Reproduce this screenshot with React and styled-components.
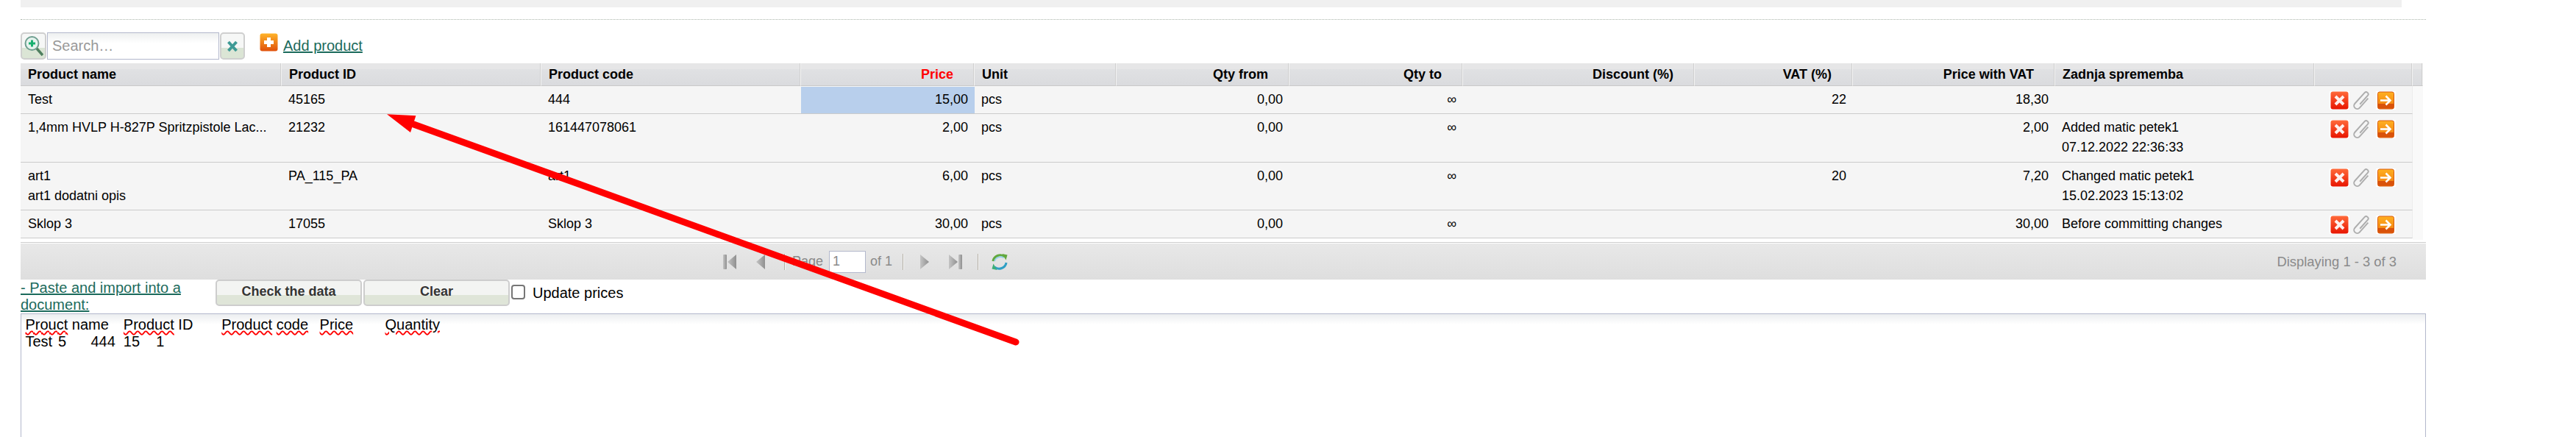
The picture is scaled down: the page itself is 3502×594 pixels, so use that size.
import React from 'react'
import styled, { createGlobalStyle } from 'styled-components'

const Global = createGlobalStyle`
html, body {
  margin: 0;
  height: 594px;
  overflow: hidden;
  background: #fff;
  font-family: "Liberation Sans", Arial, sans-serif;
  color: #000;
}
`

const Page = styled.div`
position: relative;
width: 3502px;
height: 594px;
padding-left: 28px;
box-sizing: border-box;
overflow: hidden;
`

const TopBar = styled.div`
width: 3237px;
height: 10px;
background: #f0f0f0;
`

const Divider = styled.div`
width: 3270px;
margin-top: 16px;
border-top: 1px dotted #a9b5a9;
`

const SearchRow = styled.div`
display: flex;
align-items: flex-start;
margin-top: 17px;
height: 37px;
`

const IconButton = styled.div`
box-sizing: border-box;
width: ${props => props.$width}px;
height: 37px;
display: flex;
align-items: center;
justify-content: center;
border: 2px solid #cfcfcf;
border-radius: 5px;
background: linear-gradient(#f6f7f6 0 58%, #dbe5d5 58% 100%);
`

const SearchInput = styled.input`
box-sizing: border-box;
width: 234px;
height: 37px;
margin: 0 1px;
padding: 0 0 0 6px;
border: 1px solid #b3b8cc;
background: linear-gradient(#eef0f0, #fff 14px);
font: 20px "Liberation Sans", Arial, sans-serif;
outline: none;
&::placeholder {
  color: #999;
  opacity: 1;
}
`

const AddIcon = styled.span`
display: block;
margin: 1px 0 0 20px;
height: 25px;
`

const TealLink = styled.a`
color: #1c6b5c;
font-size: 20px;
line-height: 23px;
text-decoration: underline;
`

const AddLink = styled(TealLink)`
margin: 7px 0 0 7px;
`

const Grid = styled.table`
table-layout: fixed;
width: 3266px;
margin-top: 5px;
border-collapse: separate;
border-spacing: 0;
font-size: 18px;
`

const HeadCell = styled.th`
box-sizing: border-box;
height: 31px;
padding: 0 ${props => props.$align === 'right' ? '28px' : '9px'} 0 10px;
text-align: ${props => props.$align || 'left'};
color: ${props => props.$color || '#000'};
font-size: 18px;
font-weight: bold;
white-space: nowrap;
background: linear-gradient(#e6e6e7 0 8px, #e0e1e3 8px, #dadbde 100%);
border-bottom: 1px solid #c9c9c9;
border-right: 1px solid #f2f2f2;
box-shadow: inset -1px 0 0 #d0d0d0;
`

const Cell = styled.td`
padding: 5px 9px 5px ${props => props.$first ? '10px' : '9px'};
line-height: 27.2px;
text-align: ${props => props.$align || 'left'};
vertical-align: top;
white-space: nowrap;
background: ${props => props.$active ? '#b8cfec' : '#f5f5f5'};
border-bottom: 1px solid #cbcbcb;
box-shadow: ${props => props.$active ? 'inset 0 1px 0 #f5f5f5' : 'none'};
`

const ActionCell = styled.td`
padding: ${props => props.$top}px 0 0 20px;
vertical-align: top;
background: #f5f5f5;
border-bottom: 1px solid #cbcbcb;
border-right: 1px solid #ececec;
`

const Actions = styled.div`
display: flex;
align-items: flex-start;
height: 25px;
`

const ActionIcon = styled.span`
display: block;
height: 25px;
margin-left: ${props => props.$gap || 0}px;
`

const Filler = styled.td`
background: #f9f9f9;
padding: 0;
`

const SpacerRow = styled.tr`
height: 2px;
`

const SpacerCell = styled.td`
padding: 0;
height: 2px;
line-height: 0;
font-size: 0;
`

const Pager = styled.div`
display: flex;
align-items: center;
width: 3270px;
height: 49px;
margin-top: 5px;
box-sizing: border-box;
padding: 0 40px 0 955px;
color: #8a8a8a;
font-size: 18px;
background: linear-gradient(#e8e8e8, #dedede);
box-shadow: 0 -1px 0 #fff, 0 -2px 0 #cdcdcd;
`

const PagerIcon = styled.span`
display: block;
height: 24px;
margin-left: ${props => props.$gap || 0}px;
`

const PagerSep = styled.span`
display: block;
width: 1px;
height: 22px;
margin-left: ${props => props.$gap}px;
background: #b5b0a6;
box-shadow: 1px 0 0 #f4f4f4;
`

const PagerLabel = styled.span`
margin-left: ${props => props.$gap}px;
`

const PageInput = styled.input`
box-sizing: border-box;
width: 50px;
height: 30px;
margin-left: 8px;
padding: 0 0 0 4px;
border: 1px solid #b3b8cc;
background: #fff;
color: #8a8a8a;
font: 18px "Liberation Sans", Arial, sans-serif;
`

const Displaying = styled.span`
margin-left: auto;
font-size: 18.4px;
`

const ImportRow = styled.div`
display: flex;
align-items: flex-start;
height: 46px;
`

const ImportLink = styled(TealLink)`
display: block;
width: 265px;
`

const ImportButton = styled.button`
box-sizing: border-box;
width: 199px;
height: 36px;
margin-right: 2px;
padding: 0 0 3px;
border: 2px solid #cdcdcd;
border-radius: 5px;
color: #333;
font: bold 18px "Liberation Sans", Arial, sans-serif;
background: linear-gradient(#f3f4f2 0 58%, #dfe5d8 58% 100%);
`

const Check = styled.input`
appearance: none;
box-sizing: border-box;
width: 19px;
height: 20px;
margin: 7px 0 0 0;
border: 2px solid #767676;
border-radius: 4px;
background: #fff;
`

const CheckLabel = styled.label`
margin: 7px 0 0 10px;
font-size: 20px;
line-height: 23px;
`

const PasteBox = styled.div`
box-sizing: border-box;
width: 3270px;
height: 210px;
padding: 3px 0 0 5.5px;
border: 1px solid #b3b8cc;
background: linear-gradient(#eceef0, #fff 14px);
font-size: 20px;
line-height: 22.5px;
white-space: pre;
tab-size: 8;
`

const Typo = styled.span`
text-decoration: underline wavy #f00 1.5px;
`

const Annotation = styled.svg`
position: absolute;
left: 0;
top: 0;
pointer-events: none;
`

const Grad = ({ id, from, to }) => (
  <linearGradient id={id} x1="0" y1="0" x2="0" y2="1">
    <stop offset="0" stopColor={from} />
    <stop offset="1" stopColor={to} />
  </linearGradient>
)

const RedX = () => (
  <svg width="27" height="25" viewBox="0 0 27 25">
    <rect width="27" height="25" fill="#fff" />
    <defs><Grad id="redx" from="#ff6a3a" to="#e81500" /></defs>
    <rect x="1.5" y="0.5" width="24" height="24" rx="3" fill="url(#redx)" />
    <path d="M8 7 L19 18 M19 7 L8 18" stroke="#fff" strokeWidth="4" opacity="0.92" />
  </svg>
)

const Clip = () => (
  <svg width="26" height="25" viewBox="0 0 26 26" fill="none">
    <g transform="rotate(42 13 13)">
      <path d="M17.5 5 V23 a4.5 4.5 0 0 1 -9 0 V2.5 a3 3 0 0 1 6 0 V19" stroke="#adadad" strokeWidth="2" />
    </g>
  </svg>
)

const OrangeArrow = () => (
  <svg width="27" height="25" viewBox="0 0 27 25">
    <rect width="27" height="25" fill="#fff" />
    <defs><Grad id="orarrow" from="#ffb020" to="#f07a10" /></defs>
    <rect x="2.5" y="1" width="22" height="23" rx="2.5" fill="url(#orarrow)" stroke="#d85a10" strokeWidth="1" />
    <rect x="3" y="17" width="21" height="6.5" fill="#d9520a" />
    <path d="M6 12.5 H19 M13.5 6.5 L19.5 12.5 L13.5 18.5" fill="none" stroke="#fff" strokeWidth="2.6" />
  </svg>
)

const OrangePlus = () => (
  <svg width="25" height="25" viewBox="0 0 25 25" style={{ display: 'block' }}>
    <defs><Grad id="orplus" from="#ffb42a" to="#e0500a" /></defs>
    <rect x="0.5" y="0.5" width="24" height="24" rx="3" fill="url(#orplus)" />
    <path d="M12.5 6 V19 M6 12.5 H19" stroke="#fff" strokeWidth="5" />
  </svg>
)

const Magnifier = () => (
  <svg width="27" height="31" viewBox="0 0 27 31" fill="none">
    <circle cx="11.5" cy="12" r="9" fill="#e6f3ee" stroke="#6f9f90" strokeWidth="2" />
    <path d="M11.5 7.5 V16.5 M7 12 H16" stroke="#18b070" strokeWidth="3" />
    <path d="M18 19 L26 28" stroke="#4f7f5f" strokeWidth="3.5" />
  </svg>
)

const ClearX = () => (
  <svg width="16" height="18" viewBox="0 0 16 18">
    <path d="M2.5 3 L13.5 15 M13.5 3 L2.5 15" stroke="#3f9a95" strokeWidth="4" />
  </svg>
)

const PagerGlyph = ({ width, d, bar }) => (
  <svg width={width} height="24" viewBox={`0 0 ${width} 24`} style={{ display: 'block' }}>
    <defs>
      <linearGradient id="pagerg" x1="0" y1="0" x2="1" y2="0">
        <stop offset="0" stopColor="#c4c4c4" />
        <stop offset="1" stopColor="#8f8f8f" />
      </linearGradient>
    </defs>
    {bar !== undefined && <rect x={bar} y="2" width="5" height="20" rx="1" fill="url(#pagerg)" />}
    <path d={d} fill="url(#pagerg)" />
  </svg>
)

const Refresh = () => (
  <svg width="24" height="24" viewBox="0 0 24 24" fill="none" style={{ display: 'block' }}>
    <path d="M3 11 C4 4 13 0 19 5" stroke="#62a83e" strokeWidth="3" />
    <path d="M15.5 1 L22.5 2.5 L20.5 9.5 Z" fill="#62a83e" />
    <path d="M5 11 C6.5 6 13 3.5 17.5 6.5" stroke="#8fd0ea" strokeWidth="1.6" />
    <path d="M21 13 C20 20 11 24 5 19" stroke="#2f9fc4" strokeWidth="3" />
    <path d="M8.5 23 L1.5 21.5 L3.5 14.5 Z" fill="#3cae78" />
  </svg>
)

const columns = [
  { title: 'Product name', width: 355, first: true },
  { title: 'Product ID', width: 353 },
  { title: 'Product code', width: 353 },
  { title: 'Price', width: 236, align: 'right', color: '#f00' },
  { title: 'Unit', width: 193 },
  { title: 'Qty from', width: 235, align: 'right' },
  { title: 'Qty to', width: 236, align: 'right' },
  { title: 'Discount (%)', width: 315, align: 'right' },
  { title: 'VAT (%)', width: 215, align: 'right' },
  { title: 'Price with VAT', width: 275, align: 'right' },
  { title: 'Zadnja sprememba', width: 353 },
  { title: '', width: 133 },
  { title: '', width: 14 },
]

const rows = [
  { top: 7, active: true, cells: ['Test', '45165', '444', '15,00', 'pcs', '0,00', '∞', '', '22', '18,30', ''] },
  { top: 8, cells: ['1,4mm HVLP H-827P Spritzpistole Lac...', '21232', '161447078061', '2,00', 'pcs', '0,00', '∞', '', '', '2,00', ['Added matic petek1', '07.12.2022 22:36:33']] },
  { top: 8, cells: [['art1', 'art1 dodatni opis'], 'PA_115_PA', 'art1', '6,00', 'pcs', '0,00', '∞', '', '20', '7,20', ['Changed matic petek1', '15.02.2023 15:13:02']] },
  { top: 7, cells: ['Sklop 3', '17055', 'Sklop 3', '30,00', 'pcs', '0,00', '∞', '', '', '30,00', 'Before committing changes'] },
]

const CellText = ({ value }) => Array.isArray(value)
  ? value.map(line => <div key={line}>{line}</div>)
  : value

export default function App() {
  return (
    <Page>
      <Global />
      <TopBar />
      <Divider />

      <SearchRow>
        <IconButton $width={35}><Magnifier /></IconButton>
        <SearchInput placeholder="Search…" />
        <IconButton $width={34}><ClearX /></IconButton>
        <AddIcon><OrangePlus /></AddIcon>
        <AddLink href="#add">Add product</AddLink>
      </SearchRow>

      <Grid>
        <colgroup>
          {columns.map((col, i) => <col key={i} width={col.width} />)}
        </colgroup>
        <thead>
          <tr>
            {columns.map((col, i) => (
              <HeadCell key={i} $align={col.align} $color={col.color}>{col.title}</HeadCell>
            ))}
          </tr>
        </thead>
        <tbody>
          {rows.map((row, r) => (
            <tr key={r}>
              {row.cells.map((value, c) => (
                <Cell key={c} $align={columns[c].align} $first={columns[c].first} $active={row.active && c === 3}>
                  <CellText value={value} />
                </Cell>
              ))}
              <ActionCell $top={row.top}>
                <Actions>
                  <ActionIcon><RedX /></ActionIcon>
                  <ActionIcon $gap={4}><Clip /></ActionIcon>
                  <ActionIcon $gap={6}><OrangeArrow /></ActionIcon>
                </Actions>
              </ActionCell>
              <Filler />
            </tr>
          ))}
          <SpacerRow>
            <SpacerCell colSpan={12} />
            <Filler />
          </SpacerRow>
        </tbody>
      </Grid>

      <Pager>
        <PagerIcon><PagerGlyph width={18} bar={0} d="M18 2 L6 12 L18 22 Z" /></PagerIcon>
        <PagerIcon $gap={27}><PagerGlyph width={12} d="M12 2 L0 12 L12 22 Z" /></PagerIcon>
        <PagerSep $gap={26} />
        <PagerLabel $gap={10}>Page</PagerLabel>
        <PageInput defaultValue="1" />
        <PagerLabel $gap={6}>of 1</PagerLabel>
        <PagerSep $gap={14} />
        <PagerIcon $gap={23}><PagerGlyph width={12} d="M0 2 L12 12 L0 22 Z" /></PagerIcon>
        <PagerIcon $gap={27}><PagerGlyph width={18} bar={13} d="M0 2 L12 12 L0 22 Z" /></PagerIcon>
        <PagerSep $gap={21} />
        <PagerIcon $gap={17}><Refresh /></PagerIcon>
        <Displaying>Displaying 1 - 3 of 3</Displaying>
      </Pager>

      <ImportRow>
        <ImportLink href="#paste">- Paste and import into a document:</ImportLink>
        <ImportButton>Check the data</ImportButton>
        <ImportButton>Clear</ImportButton>
        <Check type="checkbox" />
        <CheckLabel>Update prices</CheckLabel>
      </ImportRow>

      <PasteBox>
        <Typo>Prouct</Typo>{' name\t'}<Typo>Product</Typo>{' ID\t'}<Typo>Product</Typo>{' '}<Typo>code</Typo>{'\t'}<Typo>Price</Typo>{'\t'}<Typo>Quantity</Typo>{'\n'}
        {'Test\t5\t444\t15\t1'}
      </PasteBox>

      <Annotation width="3502" height="594" viewBox="0 0 3502 594">
        <path d="M561.7 168.7 L1381 465" stroke="#f00" strokeWidth="9" strokeLinecap="round" />
        <path d="M526 155.3 L565.4 157.3 L558 180 Z" fill="#f00" />
      </Annotation>
    </Page>
  )
}
